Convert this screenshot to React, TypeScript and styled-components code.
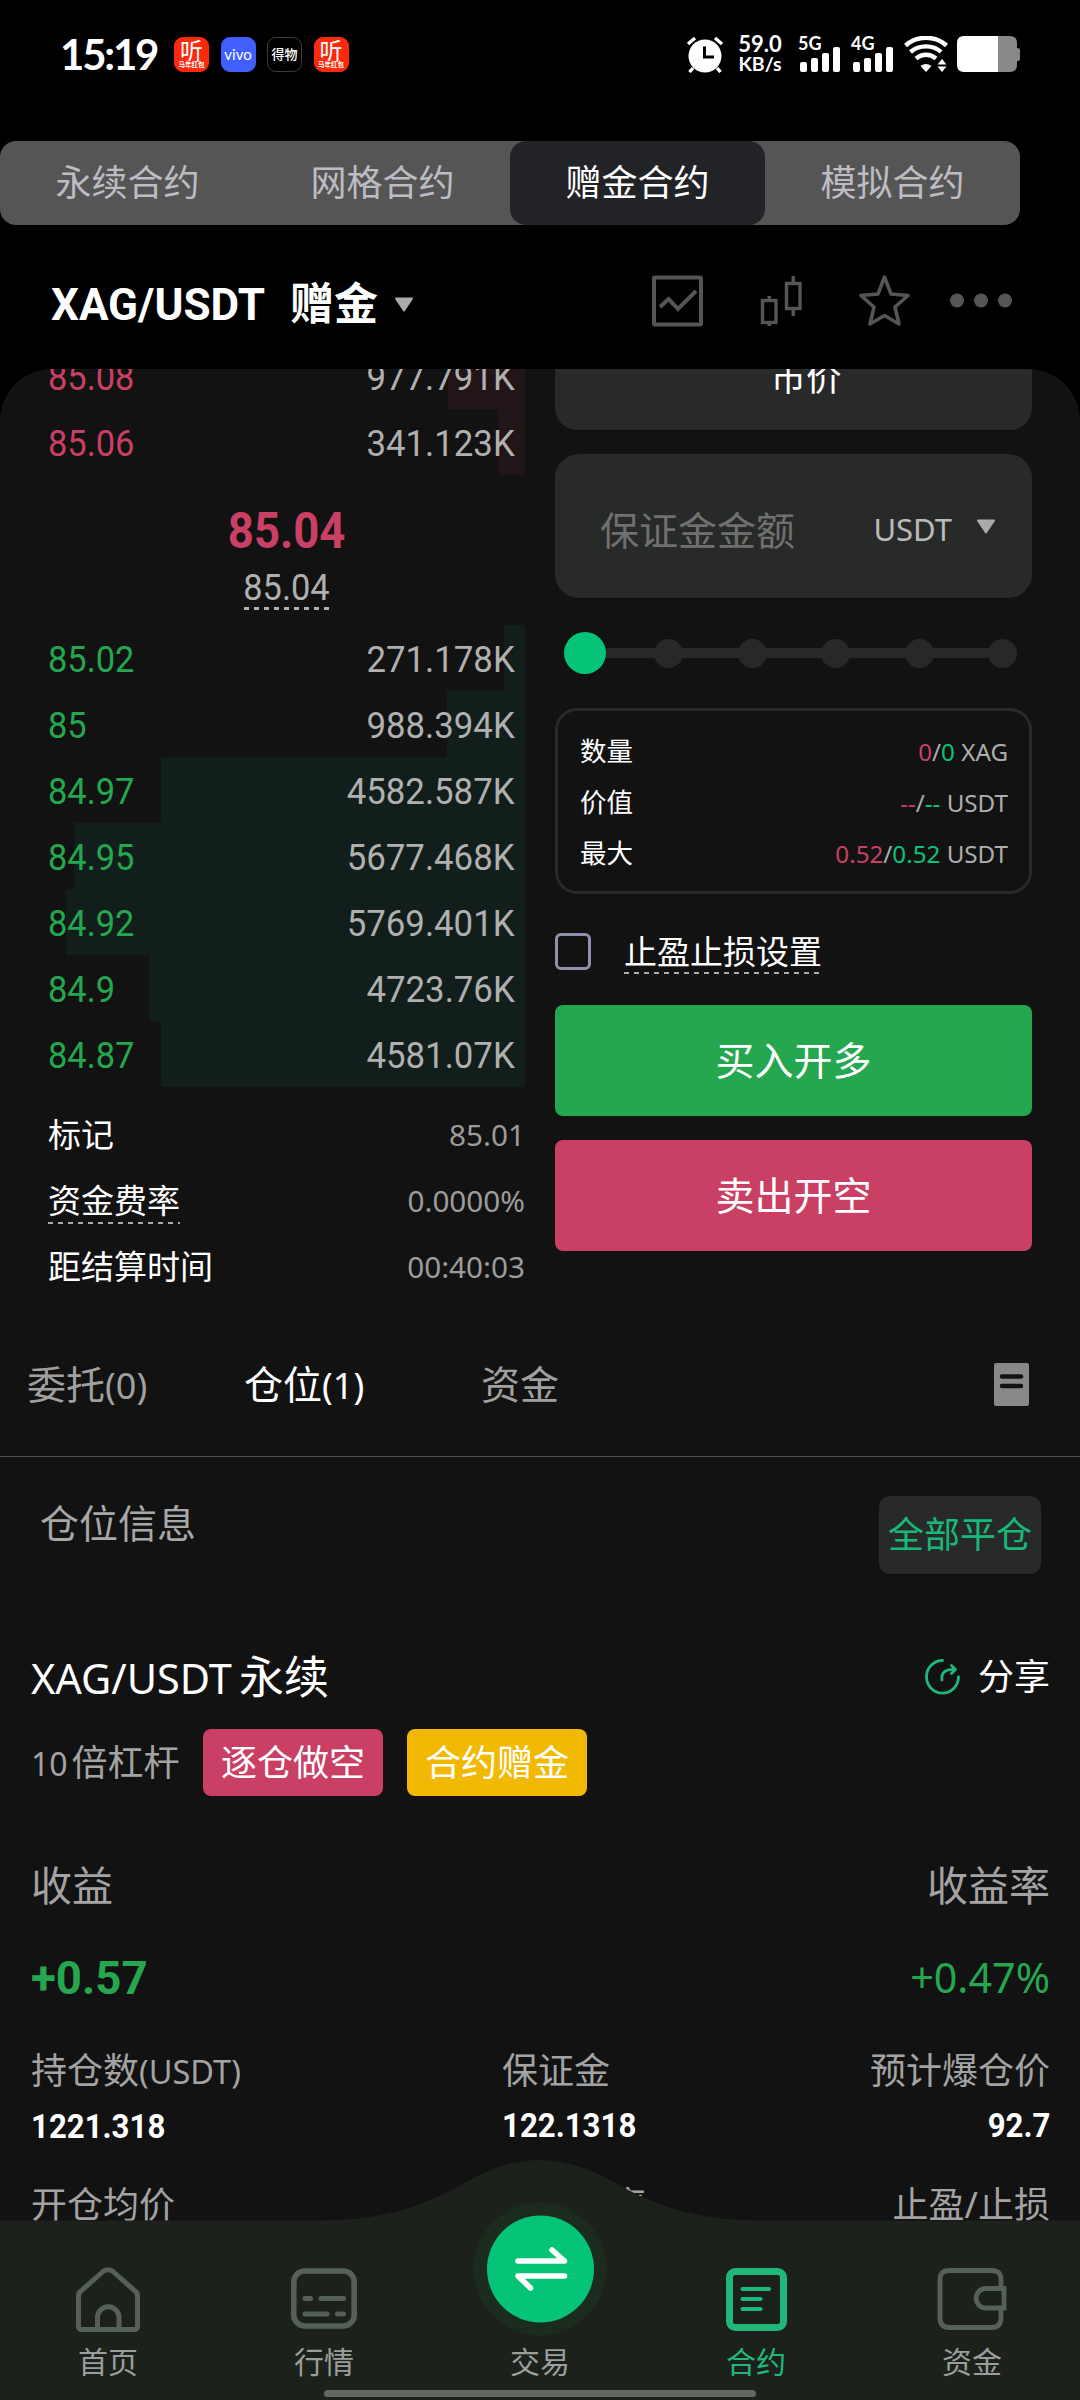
import React from "react";
import styled, { createGlobalStyle, css } from "styled-components";

const GREEN = "#25a750";
const MINT = "#05c478";
const PINK = "#ca3f64";
const GREY = "#a3a3a3";
const SANS = '"Noto Sans", "Noto Sans CJK SC", sans-serif';
const DIN = 'Roboto, "Noto Sans CJK SC", sans-serif';
const STATUS = 'Lato, "Noto Sans CJK SC", sans-serif';

const Global = createGlobalStyle`
  * { box-sizing: border-box; }
  body { margin: 0; background: #000; }
`;

const Screen = styled.div`
  position: relative;
  display: flex;
  flex-direction: column;
  width: 1080px;
  height: 2400px;
  overflow: hidden;
  background: #000;
  color: #fff;
  font-family: ${SANS};
  line-height: 1.2;
  white-space: nowrap;
`;

/* status bar */
const StatusBar = styled.header`
  display: flex;
  justify-content: space-between;
  height: 141px;
  padding: 36px 60px 0 60px;
  font-family: ${STATUS};
  font-weight: 700;
`;
const StatusGroup = styled.div`
  display: flex;
  height: 36px;
  align-items: center;
`;
const Clock = styled.span`
  width: 114px;
  font-size: 42px;
  letter-spacing: -2.2px;
`;
const AppIcon = styled.span<{ $bg: string; $line?: string }>`
  display: flex;
  flex-direction: column;
  align-items: center;
  justify-content: center;
  width: 35px;
  height: 35px;
  margin-right: 11.5px;
  border-radius: 9px;
  border: 1px solid ${(p) => p.$line ?? p.$bg};
  background: ${(p) => p.$bg};
`;
const AppGlyph = styled.span<{ $size: number; $weight?: number }>`
  font-size: ${(p) => p.$size}px;
  line-height: 1;
  font-weight: ${(p) => p.$weight ?? 400};
`;
const Speed = styled.div`
  display: flex;
  flex-direction: column;
  align-items: center;
  width: 44px;
  margin: 0 16px 0 14px;
  font-size: 22px;
  line-height: 20px;
`;
const SpeedUnit = styled.span`
  font-size: 19.5px;
`;
const Signal = styled.div`
  display: flex;
  flex-direction: column;
  width: 43px;
  height: 36px;
  margin-right: 10px;
  font-size: 18px;
  line-height: 15px;
`;
const Bars = styled.div`
  display: flex;
  align-items: flex-end;
  gap: 4.5px;
  height: 25px;
  margin: -4px 0 0 2px;
`;
const Bar = styled.i<{ $h: number }>`
  width: 6.5px;
  height: ${(p) => p.$h}px;
  border-radius: 2px;
  background: #fff;
`;

/* contract tabs */
const Segments = styled.nav`
  display: flex;
  width: 1020px;
  height: 84px;
  border-radius: 16px;
  background: #555;
`;
const Segment = styled.div<{ $active?: boolean }>`
  display: flex;
  flex: 1;
  align-items: center;
  justify-content: center;
  border-radius: 16px;
  font-size: 36px;
  color: ${(p) => (p.$active ? "#fff" : "#bdbcc2")};
  background: ${(p) => (p.$active ? "#222327" : "transparent")};
`;

/* pair header */
const PairBar = styled.div`
  display: flex;
  align-items: center;
  height: 144px;
  padding: 16px 66px 0 51px;
`;
const PairName = styled.h1`
  display: flex;
  align-items: center;
  margin: 0;
  font-family: ${DIN};
  font-size: 44px;
  font-weight: 700;
`;
const PairKind = styled.span`
  margin: 0 16px 0 25px;
`;
const PairActions = styled.div`
  display: flex;
  align-items: center;
  margin-left: auto;
  margin-top: -8px;
`;

/* scrolling panel */
const Panel = styled.main`
  flex: 1;
  overflow: hidden;
  border-radius: 52px 52px 0 0;
  background: #121212;
`;
const TradeArea = styled.section`
  display: flex;
  height: 926px;
`;
const Book = styled.div`
  width: 525px;
  margin-top: -26px;
`;
const BookRow = styled.div<{ $side: "buy" | "sell"; $depth: number }>`
  display: flex;
  justify-content: space-between;
  align-items: center;
  height: 66px;
  padding: 5px 10px 0 47.5px;
  font-family: ${DIN};
  font-size: 37px;
  color: ${(p) => (p.$side === "buy" ? GREEN : PINK)};
  background: linear-gradient(${(p) => (p.$side === "buy" ? "#121e1b, #121e1b" : "#221518, #221518")}) right / ${(p) => p.$depth}px 100% no-repeat;
`;
const Squeeze = styled.span<{ $from: "left" | "right" | "center"; $k?: number; $color?: string }>`
  display: inline-block;
  transform: scaleX(${(p) => p.$k ?? 0.93});
  transform-origin: ${(p) => p.$from};
  color: ${(p) => p.$color ?? "inherit"};
`;
const dashes = css`
  background: repeating-linear-gradient(90deg, currentColor 0 5px, transparent 5px 10px) bottom / 100% var(--t) no-repeat;
`;
const LastPrice = styled.div`
  display: flex;
  flex-direction: column;
  align-items: center;
  height: 150px;
  padding: 26px 0 0 48px;
  font-family: ${DIN};
`;
const LastValue = styled.strong`
  font-size: 50px;
  line-height: 60px;
  color: ${PINK};
`;
const IndexValue = styled.span`
  --t: 3px;
  width: 85px;
  height: 49px;
  display: flex;
  justify-content: center;
  font-size: 37px;
  line-height: 53px;
  color: #b0b0b0;
  ${dashes}
`;
const InfoRow = styled.div`
  display: flex;
  justify-content: space-between;
  align-items: center;
  height: 66px;
  padding-left: 48px;
  font-size: 33px;
`;
const InfoList = styled.div`
  margin-top: 15px;
`;
const Hint = styled.span<{ $pad: number }>`
  --t: 2px;
  padding-bottom: ${(p) => p.$pad}px;
  margin-bottom: -${(p) => p.$pad}px;
  ${dashes}
  background-image: repeating-linear-gradient(90deg, #aaa 0 5px, transparent 5px 10px);
`;
const InfoValue = styled.span`
  font-size: 29.7px;
  color: #9c9c9c;
`;

/* order form */
const Form = styled.div`
  width: 477px;
  margin: -47px 0 0 30px;
`;
const MarketBox = styled.div`
  display: flex;
  align-items: center;
  justify-content: center;
  height: 108px;
  padding: 2px 0 0 25px;
  border-radius: 22px;
  background: #282a29;
  font-size: 35.5px;
`;
const AmountBox = styled.div`
  display: flex;
  align-items: center;
  height: 144px;
  margin-top: 24px;
  padding: 8px 36px 0 45px;
  border-radius: 24px;
  background: #282a29;
  font-size: 39px;
  color: #6f706f;
`;
const Unit = styled.span`
  margin: 0 24px 0 auto;
  font-size: 31px;
  color: #b9bbba;
`;
const UnitCaret = styled.span`
  display: flex;
  margin-top: -6px;
`;
const Slider = styled.div`
  display: flex;
  align-items: center;
  justify-content: space-between;
  height: 42px;
  margin: 34px 15px 34px 9px;
  background: linear-gradient(#282828, #282828) center / 430px 10px no-repeat;
`;
const Thumb = styled.i`
  width: 42px;
  height: 42px;
  margin-right: -6.5px;
  border-radius: 50%;
  background: ${MINT};
`;
const Stop = styled.i`
  width: 29px;
  height: 29px;
  border-radius: 50%;
  background: #282828;
`;
const Summary = styled.div`
  display: flex;
  flex-direction: column;
  justify-content: center;
  height: 186px;
  padding: 3px 21px 0 22px;
  border: 3px solid #2a2a2a;
  border-radius: 22px;
`;
const SummaryRow = styled.div`
  display: flex;
  align-items: center;
  justify-content: space-between;
  height: 51px;
  font-size: 26.5px;
`;
const SummaryValue = styled.span`
  font-size: 24.2px;
  color: #adadad;
`;
const Tint = styled.span<{ $c: string }>`
  color: ${(p) => p.$c};
`;
const StopRow = styled.div`
  display: flex;
  align-items: center;
  height: 37px;
  margin: 39px 0 35px;
  font-size: 33px;
`;
const Checkbox = styled.i`
  width: 36px;
  height: 37px;
  margin-right: 33px;
  border: 3px solid #8f91ae;
  border-radius: 6px;
`;
const OrderButton = styled.button<{ $bg: string }>`
  display: flex;
  align-items: center;
  justify-content: center;
  width: 100%;
  height: 111px;
  margin: 0 0 24px;
  padding: 0;
  border: 0;
  border-radius: 8px;
  background: ${(p) => p.$bg};
  color: #fff;
  font: 39px / 1.2 ${SANS};
`;

/* positions */
const TabRow = styled.div`
  display: flex;
  align-items: center;
  height: 162px;
  padding: 38px 51px 20px 27px;
  border-bottom: 1px solid #505050;
  font-size: 39px;
`;
const PosTab = styled.span<{ $w: number; $active?: boolean }>`
  width: ${(p) => p.$w}px;
  color: ${(p) => (p.$active ? "#fff" : "#a0a0a0")};
`;
const Latin = styled.span<{ $size: number; $gap?: number }>`
  margin-right: ${(p) => p.$gap ?? 0}px;
  font-size: ${(p) => p.$size}px;
`;
const TabIcon = styled.svg`
  margin-left: auto;
`;
const SectionHead = styled.div`
  display: flex;
  justify-content: space-between;
  align-items: flex-start;
  height: 156px;
  padding: 39px 39px 0 40px;
  font-size: 39px;
  color: #a8a8a8;
`;
const SectionTitle = styled.span`
  margin-top: 4px;
`;
const CloseAll = styled.button`
  display: flex;
  align-items: center;
  justify-content: center;
  width: 162px;
  height: 78px;
  padding: 0;
  border: 0;
  border-radius: 11px;
  background: #282a29;
  color: #17b97b;
  font: 36px / 1.2 ${SANS};
`;
const Position = styled.article`
  padding: 34px 30px 0 31px;
`;
const PosHead = styled.div`
  display: flex;
  align-items: center;
  justify-content: space-between;
  height: 60px;
  font-size: 45px;
`;
const Share = styled.span`
  display: flex;
  align-items: center;
  gap: 18px;
  font-size: 36px;
`;
const Tags = styled.div`
  display: flex;
  align-items: center;
  height: 67px;
  margin-top: 22px;
  font-size: 36px;
  color: ${GREY};
`;
const Leverage = styled.span`
  width: 172px;
`;
const Tag = styled.span<{ $bg: string }>`
  display: flex;
  align-items: center;
  justify-content: center;
  width: 180px;
  height: 67px;
  margin-right: 24px;
  border-radius: 8px;
  background: ${(p) => p.$bg};
  color: #fff;
`;
const Split = styled.div<{ $top: number; $size: number; $color: string }>`
  display: flex;
  align-items: center;
  justify-content: space-between;
  height: 50px;
  margin-top: ${(p) => p.$top}px;
  font-size: ${(p) => p.$size}px;
  color: ${(p) => p.$color};
`;
const Gain = styled.strong`
  font-family: ${DIN};
  font-size: 47px;
`;
const Stats = styled.div`
  display: grid;
  grid-template-columns: 471px 1fr auto;
  row-gap: 20px;
  margin-top: 40px;
`;
const Stat = styled.div<{ $end?: boolean }>`
  display: flex;
  flex-direction: column;
  align-items: ${(p) => (p.$end ? "flex-end" : "flex-start")};
  height: 114px;
`;
const StatLabel = styled.span`
  font-size: 36px;
  line-height: 56px;
  color: ${GREY};
`;
const StatValue = styled.strong`
  font-family: ${DIN};
  font-size: 33px;
  line-height: 54px;
`;

/* bottom navigation, floats over the scrolled content */
const NavBar = styled.footer`
  position: absolute;
  left: 0;
  bottom: 0;
  width: 1080px;
  height: 241px;
`;
const NavShape = styled.svg`
  position: absolute;
  inset: 0;
`;
const NavItems = styled.div`
  position: relative;
  display: flex;
  height: 231px;
  padding-top: 42px;
`;
const NavItem = styled.div<{ $active?: boolean }>`
  display: flex;
  flex: 1;
  flex-direction: column;
  align-items: center;
  justify-content: flex-end;
  font-size: 30px;
  line-height: 36px;
  padding-bottom: 10px;
  color: ${(p) => (p.$active ? "#1fb87a" : "#9b9e9b")};
`;
const NavIcon = styled.svg`
  margin-bottom: 11px;
`;
const HomeIndicator = styled.i`
  position: relative;
  display: block;
  width: 432px;
  height: 7px;
  margin: 0 auto;
  border-radius: 4px;
  background: #636863;
`;

const Caret = () => (
  <svg width="20" height="16" viewBox="0 0 20 16">
    <path d="M2 1.5H18L10 13.5Z" fill="#aaa" stroke="#aaa" strokeWidth="2" strokeLinejoin="round" />
  </svg>
);

const SignalMeter = ({ label }: { label: string }) => (
  <Signal>
    <span>{label}</span>
    <Bars>
      {[10, 14, 19, 25].map((h) => (
        <Bar key={h} $h={h} />
      ))}
    </Bars>
  </Signal>
);

const ListenIcon = () => (
  <AppIcon $bg="#fb2a0c">
    <AppGlyph $size={23}>听</AppGlyph>
    <AppGlyph $size={6.5} $weight={700}>
      马年红包
    </AppGlyph>
  </AppIcon>
);

const sells = [
  { price: "85.08", amount: "977.791K", depth: 77 },
  { price: "85.06", amount: "341.123K", depth: 27 },
];
const buys = [
  { price: "85.02", amount: "271.178K", depth: 21 },
  { price: "85", amount: "988.394K", depth: 78 },
  { price: "84.97", amount: "4582.587K", depth: 364 },
  { price: "84.95", amount: "5677.468K", depth: 451 },
  { price: "84.92", amount: "5769.401K", depth: 459 },
  { price: "84.9", amount: "4723.76K", depth: 376 },
  { price: "84.87", amount: "4581.07K", depth: 364 },
];

const Rows = ({ side, rows }: { side: "buy" | "sell"; rows: typeof sells }) => (
  <>
    {rows.map((r) => (
      <BookRow key={r.price} $side={side} $depth={r.depth}>
        <Squeeze $from="left">{r.price}</Squeeze>
        <Squeeze $from="right" $k={0.94} $color="#b0b0b0">
          {r.amount}
        </Squeeze>
      </BookRow>
    ))}
  </>
);

export default function App() {
  return (
    <Screen>
      <Global />
      <StatusBar>
        <StatusGroup>
          <Clock>15:19</Clock>
          <ListenIcon />
          <AppIcon $bg="#415fff">
            <AppGlyph $size={15}>vivo</AppGlyph>
          </AppIcon>
          <AppIcon $bg="#000" $line="#3c3c3c">
            <AppGlyph $size={13} $weight={500}>
              得物
            </AppGlyph>
          </AppIcon>
          <ListenIcon />
        </StatusGroup>
        <StatusGroup>
          <svg width="38" height="37" viewBox="0 0 38 37">
            <circle cx="19" cy="20" r="16.5" fill="#fff" />
            <path d="M2 8L9 2M36 8L29 2M7 32L3.5 36M31 32L34.5 36" stroke="#fff" strokeWidth="3.4" />
            <path d="M18.5 10.5V21H28" stroke="#000" strokeWidth="3" fill="none" />
          </svg>
          <Speed>
            <span>59.0</span>
            <SpeedUnit>KB/s</SpeedUnit>
          </Speed>
          <SignalMeter label="5G" />
          <SignalMeter label="4G" />
          <svg width="44" height="36" viewBox="0 0 44 36">
            <g fill="none" stroke="#fff" strokeWidth="4.4">
              <path d="M1.5 9.5C13 -.8 31 -.8 42.500 9.500" />
              <path d="M6.500 16C15 8.500 29 8.500 37 16" />
              <path d="M12 22.500C18 17.500 26 17.500 32 22.500" />
            </g>
            <path d="M16.500 30Q22 26 27.500 30L22 36Z" fill="#fff" />
            <path d="M33.500 28.500L38 23L42.500 28.500ZM33.500 30.500L38 36L42.500 30.500Z" fill="#fff" />
          </svg>
          <svg width="72" height="36" viewBox="-9 0 72 36">
            <path d="M40 0H53Q60 0 60 7V12Q63 12 63 14V23Q63 25 60 25V29Q60 36 53 36H40Z" fill="#888" />
            <path d="M41 0H7Q0 0 0 7V29Q0 36 7 36H41Z" fill="#fff" />
          </svg>
        </StatusGroup>
      </StatusBar>

      <Segments>
        <Segment>永续合约</Segment>
        <Segment>网格合约</Segment>
        <Segment $active>赠金合约</Segment>
        <Segment>模拟合约</Segment>
      </Segments>

      <PairBar>
        <PairName>
          XAG/USDT
          <PairKind>赠金</PairKind>
          <Caret />
        </PairName>
        <PairActions>
          <svg width="362" height="52" viewBox="0 0 362 52" fill="none" stroke="#555">
            <rect x="2" y="2.500" width="47" height="47" rx="1" strokeWidth="4" />
            <path d="M8 32L16.500 24L26 34L44 16" strokeWidth="4" />
            <g strokeWidth="3.400">
              <rect x="110.500" y="25.500" width="13.500" height="22" />
              <path d="M117.200 21V25M117.200 48V51" />
              <rect x="134.500" y="8.500" width="13.500" height="25" />
              <path d="M141.200 1V8M141.200 34V41" />
            </g>
            <path
              d="M232.500 2L239 19L256 20.500L243 32L247 49L232.500 40.500L218 49L222 32L209 20.500L226 19Z"
              strokeWidth="3.600"
              strokeLinejoin="round"
            />
            <g fill="#555" stroke="none">
              <circle cx="305" cy="25.500" r="7" />
              <circle cx="329" cy="25.500" r="7" />
              <circle cx="353" cy="25.500" r="7" />
            </g>
          </svg>
        </PairActions>
      </PairBar>

      <Panel>
        <TradeArea>
          <Book>
            <Rows side="sell" rows={sells} />
            <LastPrice>
              <LastValue>
                <Squeeze $from="center" $k={0.91}>
                  85.04
                </Squeeze>
              </LastValue>
              <IndexValue>
                <Squeeze $from="center">85.04</Squeeze>
              </IndexValue>
            </LastPrice>
            <Rows side="buy" rows={buys} />
            <InfoList>
              <InfoRow>
                标记<InfoValue>85.01</InfoValue>
              </InfoRow>
              <InfoRow>
                <Hint $pad={3}>资金费率</Hint>
                <InfoValue>0.0000%</InfoValue>
              </InfoRow>
              <InfoRow>
                距结算时间<InfoValue>00:40:03</InfoValue>
              </InfoRow>
            </InfoList>
          </Book>

          <Form>
            <MarketBox>市价</MarketBox>
            <AmountBox>
              保证金金额
              <Unit>USDT</Unit>
              <UnitCaret>
                <Caret />
              </UnitCaret>
            </AmountBox>
            <Slider>
              <Thumb />
              <Stop />
              <Stop />
              <Stop />
              <Stop />
              <Stop />
            </Slider>
            <Summary>
              <SummaryRow>
                数量
                <SummaryValue>
                  <Tint $c={PINK}>0</Tint>/<Tint $c={MINT}>0</Tint> XAG
                </SummaryValue>
              </SummaryRow>
              <SummaryRow>
                价值
                <SummaryValue>
                  <Tint $c={PINK}>--</Tint>/<Tint $c={MINT}>--</Tint> USDT
                </SummaryValue>
              </SummaryRow>
              <SummaryRow>
                最大
                <SummaryValue>
                  <Tint $c={PINK}>0.52</Tint>/<Tint $c={MINT}>0.52</Tint> USDT
                </SummaryValue>
              </SummaryRow>
            </Summary>
            <StopRow>
              <Checkbox />
              <Hint $pad={3}>止盈止损设置</Hint>
            </StopRow>
            <OrderButton $bg={GREEN}>买入开多</OrderButton>
            <OrderButton $bg={PINK}>卖出开空</OrderButton>
          </Form>
        </TradeArea>

        <TabRow>
          <PosTab $w={217}>
            委托<Latin $size={36}>(0)</Latin>
          </PosTab>
          <PosTab $w={237} $active>
            仓位<Latin $size={36}>(1)</Latin>
          </PosTab>
          <PosTab $w={80}>资金</PosTab>
          <TabIcon width="35" height="43" viewBox="0 0 35 43">
            <rect width="35" height="43" rx="2" fill="#888" />
            <path d="M8 13.500H27M8 23H27" stroke="#121212" strokeWidth="4.600" strokeLinecap="round" />
          </TabIcon>
        </TabRow>

        <SectionHead>
          <SectionTitle>仓位信息</SectionTitle>
          <CloseAll>全部平仓</CloseAll>
        </SectionHead>

        <Position>
          <PosHead>
            <span>
              <Latin $size={41.5} $gap={7}>
                XAG/USDT
              </Latin>
              永续
            </span>
            <Share>
              <svg width="35" height="36" viewBox="0 0 35 36" fill="none" stroke="#1fb87a" strokeWidth="2.800" strokeLinecap="round" strokeLinejoin="round">
                <path d="M17.500 1.500A16 16.300 0 1 0 33.500 18" />
                <path d="M17 21C16 14 20 10 30 10.500M26.500 6.500L30.500 10.500L26.500 14.500" />
              </svg>
              分享
            </Share>
          </PosHead>
          <Tags>
            <Leverage>
              <Latin $size={32} $gap={4}>
                10
              </Latin>
              倍杠杆
            </Leverage>
            <Tag $bg={PINK}>逐仓做空</Tag>
            <Tag $bg="#f2b903">合约赠金</Tag>
          </Tags>
          <Split $top={65} $size={41} $color={GREY}>
            <span>收益</span>
            <span>收益率</span>
          </Split>
          <Split $top={42} $size={41.3} $color={GREEN}>
            <Gain>
              <Squeeze $from="left" $k={0.97}>
                +0.57
              </Squeeze>
            </Gain>
            <span>+0.47%</span>
          </Split>
          <Stats>
            <Stat>
              <StatLabel>
                持仓数<Latin $size={32.5}>(USDT)</Latin>
              </StatLabel>
              <StatValue>
                <Squeeze $from="left" $k={0.945}>
                  1221.318
                </Squeeze>
              </StatValue>
            </Stat>
            <Stat>
              <StatLabel>保证金</StatLabel>
              <StatValue>
                <Squeeze $from="left" $k={0.945}>
                  122.1318
                </Squeeze>
              </StatValue>
            </Stat>
            <Stat $end>
              <StatLabel>预计爆仓价</StatLabel>
              <StatValue>
                <Squeeze $from="right" $k={0.945}>
                  92.7
                </Squeeze>
              </StatValue>
            </Stat>
            <Stat>
              <StatLabel>开仓均价</StatLabel>
            </Stat>
            <Stat>
              <StatLabel>保证金率</StatLabel>
            </Stat>
            <Stat $end>
              <StatLabel>止盈/止损</StatLabel>
            </Stat>
          </Stats>
        </Position>
      </Panel>

      <NavBar>
        <NavShape width="1080" height="241" viewBox="0 0 1080 241">
          <path d="M0 61.500H320C385 61.500 425 46 461 26C490 9 515 1 540 1S590 9 619 26C655 46 695 61.500 760 61.500H1080V241H0Z" fill="#1c211c" />
          <circle cx="540" cy="110" r="66.500" fill="#1b2c1f" />
          <circle cx="540.500" cy="110" r="53.500" fill={MINT} />
          <path d="M518 102H564.500L552 91M564.500 117H518L530.500 129" fill="none" stroke="#fff" strokeWidth="5.600" strokeLinecap="round" strokeLinejoin="round" />
        </NavShape>
        <NavItems>
          <NavItem>
            <NavIcon width="64" height="66" viewBox="0 0 64 66" fill="none" stroke="#566156" strokeWidth="5" strokeLinejoin="round">
              <path d="M2.500 29Q2.500 26 5 24L27 4.500Q32 1 37 4.500L59 24Q61.500 26 61.500 29V59Q61.500 62.500 58 62.500H6Q2.500 62.500 2.500 59Z" />
              <path d="M21.500 62V49.500A10.800 10.800 0 0 1 43 49.500V62" />
            </NavIcon>
            首页
          </NavItem>
          <NavItem>
            <NavIcon width="66" height="66" viewBox="0 0 66 66" fill="none" stroke="#566156" strokeWidth="5.600" strokeLinecap="round">
              <rect x="2.800" y="4" width="60.400" height="55" rx="11" />
              <path d="M14 31.500H19.500M30 31.500H52.500M14 47H36M46.500 47H52.500" strokeWidth="5" />
            </NavIcon>
            行情
          </NavItem>
          <NavItem>交易</NavItem>
          <NavItem $active>
            <NavIcon width="61" height="66" viewBox="0 0 61 66" fill="none" stroke="#1fb87a" strokeLinecap="round">
              <rect x="3.500" y="4.500" width="54" height="56" rx="6" strokeWidth="7" />
              <path d="M16.500 22H43M16.500 32H34.500M16.500 42H34.500" strokeWidth="4.200" />
            </NavIcon>
            合约
          </NavItem>
          <NavItem>
            <NavIcon width="70" height="66" viewBox="0 0 70 66" fill="none" stroke="#566156" strokeWidth="4.800">
              <path d="M64 20.500V13Q64 3.500 54.500 3.500H12.500Q3 3.500 3 13V51Q3 60.500 12.500 60.500H54.500Q64 60.500 64 51V43" />
              <path d="M67 21.500H48A9.800 9.800 0 0 0 48 41H67Z" />
            </NavIcon>
            资金
          </NavItem>
        </NavItems>
        <HomeIndicator />
      </NavBar>
    </Screen>
  );
}
